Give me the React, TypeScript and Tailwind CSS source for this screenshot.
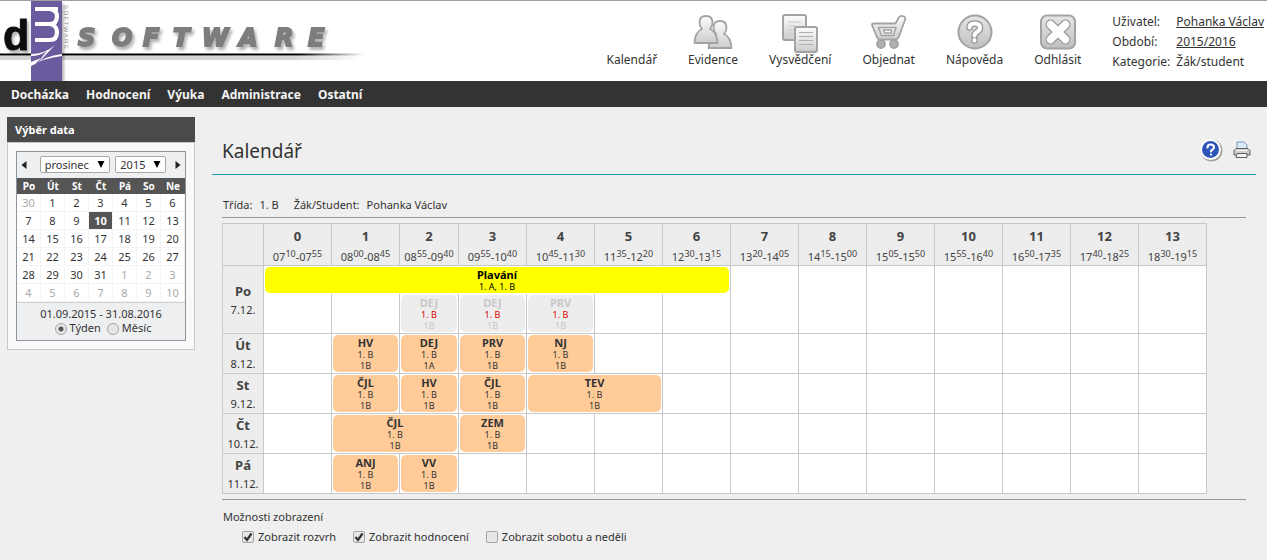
import { clsx } from 'clsx';
import type { ReactNode } from 'react';

type Lesson = {
  title: string;
  group: string;
  room: string;
  span?: number;
  cancelled?: boolean;
};

type Slot = Lesson | null;

const MENU = ['Docházka', 'Hodnocení', 'Výuka', 'Administrace', 'Ostatní'];

const HOURS = [
  ['07', '10', '07', '55'],
  ['08', '00', '08', '45'],
  ['08', '55', '09', '40'],
  ['09', '55', '10', '40'],
  ['10', '45', '11', '30'],
  ['11', '35', '12', '20'],
  ['12', '30', '13', '15'],
  ['13', '20', '14', '05'],
  ['14', '15', '15', '00'],
  ['15', '05', '15', '50'],
  ['15', '55', '16', '40'],
  ['16', '50', '17', '35'],
  ['17', '40', '18', '25'],
  ['18', '30', '19', '15'],
];

const lesson = (title: string, room = '1B', span = 1): Lesson => ({
  title,
  group: '1. B',
  room,
  span,
});
const cancelled = (title: string): Lesson => ({ ...lesson(title), cancelled: true });
const empty = (count: number): Slot[] => Array.from({ length: count }, () => null);

const DAYS: { name: string; date: string; slots: Slot[] }[] = [
  {
    name: 'Út',
    date: '8.12.',
    slots: [null, lesson('HV'), lesson('DEJ', '1A'), lesson('PRV'), lesson('NJ'), ...empty(9)],
  },
  {
    name: 'St',
    date: '9.12.',
    slots: [null, lesson('ČJL'), lesson('HV'), lesson('ČJL'), lesson('TEV', '1B', 2), ...empty(8)],
  },
  {
    name: 'Čt',
    date: '10.12.',
    slots: [null, lesson('ČJL', '1B', 2), lesson('ZEM'), ...empty(10)],
  },
  {
    name: 'Pá',
    date: '11.12.',
    slots: [null, lesson('ANJ'), lesson('VV'), ...empty(11)],
  },
];

const MONDAY_SLOTS: Slot[] = [null, null, cancelled('DEJ'), cancelled('DEJ'), cancelled('PRV'), null, null];

const WEEKS = [
  [30, 1, 2, 3, 4, 5, 6],
  [7, 8, 9, 10, 11, 12, 13],
  [14, 15, 16, 17, 18, 19, 20],
  [21, 22, 23, 24, 25, 26, 27],
  [28, 29, 30, 31, 1, 2, 3],
  [4, 5, 6, 7, 8, 9, 10],
];

const isOutside = (week: number, day: number) =>
  (week === 0 && day > 20) || (week > 3 && day < 20);

function Logo() {
  return (
    <svg width="366" height="80" viewBox="0 0 366 80" role="img" aria-label="dm Software">
      <defs>
        <linearGradient id="line" x1="0" x2="1">
          <stop offset="0.82" stopColor="#000" />
          <stop offset="1" stopColor="#000" stopOpacity="0" />
        </linearGradient>
        <linearGradient id="lineShadow" x1="0" x2="1">
          <stop offset="0.8" stopColor="#d4d4d4" />
          <stop offset="1" stopColor="#d4d4d4" stopOpacity="0" />
        </linearGradient>
        <filter id="shadow" x="-10%" y="-20%" width="120%" height="160%">
          <feDropShadow dx="2" dy="3" stdDeviation="1.5" floodColor="#000" floodOpacity="0.3" />
        </filter>
      </defs>
      <rect y="55" width="364" height="4" fill="url(#lineShadow)" />
      <rect y="52.500" width="364" height="2" fill="url(#line)" />
      <text x="3" y="49" fontFamily="Liberation Sans" fontWeight="700" fontSize="43" fill="#111" stroke="#111" filter="url(#shadow)">
        d
      </text>
      <rect x="31" y="0" width="31" height="80" fill="#6a5a9e" filter="url(#shadow)" />
      <path
        d="M35 8H58M50 8Q57 9.500 57 15Q57 23 50 23H35M50 23Q57 24.500 57 31Q57 39 50 39H35"
        fill="none"
        stroke="#fff"
        strokeWidth="4.200"
      />
      <g fill="#fff">
        <path d="M31 53Q45 53 55 44L39 61Q42 55 47 50Q40 55 31 55Z" />
        <path d="M31 61L41 57L34 64Q45 55 62 53V55Q44 57 31 65Z" />
      </g>
      <text
        x="0 5.500 11.500 16.500 21.500 28.500 34 40"
        y="0"
        transform="translate(64 4) rotate(90)"
        fontFamily="Liberation Sans"
        fontSize="6"
        fill="#888"
      >
        SOFTWARE
      </text>
      <text
        x="78 112 143 173 202 239 275 308"
        y="45"
        fontFamily="DejaVu Sans"
        fontWeight="700"
        fontStyle="italic"
        fontSize="24"
        fill="#7d7d7d"
        stroke="#7d7d7d"
        strokeWidth="2"
        filter="url(#shadow)"
      >
        SOFTWARE
      </text>
    </svg>
  );
}

function IconDefs() {
  return (
    <svg width="0" height="0" className="absolute" aria-hidden="true">
      <defs>
        <linearGradient id="silver" x1="0" y1="0" x2="0" y2="1">
          <stop offset="0" stopColor="#fdfdfd" />
          <stop offset="1" stopColor="#cccccc" />
        </linearGradient>
        <linearGradient id="silverDark" x1="0" y1="0" x2="0" y2="1">
          <stop offset="0" stopColor="#e6e6e6" />
          <stop offset="1" stopColor="#bfbfbf" />
        </linearGradient>
      </defs>
    </svg>
  );
}

function PeopleIcon() {
  const person = 'M9 18Q6.500 15 6.500 11.500Q6.500 5 13 5Q19.500 5 19.500 11.500Q19.500 15 17 18Q24 21 24.500 32H1.500Q2 21 9 18Z';
  return (
    <svg width="40" height="36" viewBox="0 0 40 36" fill="url(#silver)" stroke="#a3a3a3" strokeWidth="1.800" strokeLinejoin="round">
      <path d={person} transform="translate(14 2)" />
      <path d={person} transform="translate(0 -3)" />
    </svg>
  );
}

function PagesIcon() {
  return (
    <svg width="38" height="40" viewBox="0 0 38 40" fill="url(#silver)" stroke="#a3a3a3" strokeWidth="2">
      <rect x="2" y="1" width="23" height="25" rx="2" />
      <path d="M7 8H20M7 12H15M7 16H15M7 20H14" stroke="#c9c9c9" strokeWidth="1" />
      <rect x="14" y="13" width="22" height="25" rx="2" />
      <path d="M18 18.500H32M18 22.500H32M18 26.500H32M18 30.500H32" stroke="#b0b0b0" strokeWidth="1" />
    </svg>
  );
}

function CartIcon() {
  return (
    <svg width="36" height="36" viewBox="0 0 36 36" fill="url(#silver)" stroke="#a3a3a3" strokeWidth="1.800" strokeLinejoin="round">
      <path d="M1 11Q1 9.500 3 9.500H24.500L27.500 4Q28.500 1.500 31.500 2Q35 2.500 34 6L27.500 23.500Q26.500 25.500 24.500 25.500H9Q7 25.500 6 23.500Z" />
      <path d="M7.500 13.500H25L22.500 21.500H10.500Z" fill="#e8e8e8" strokeWidth="1.500" />
      <path d="M12.500 16H20.500V19H13.500Z" fill="#fff" strokeWidth="1.500" />
      <circle cx="10" cy="30" r="4" fill="#b0b0b0" />
      <circle cx="23" cy="30" r="4" fill="#b0b0b0" />
    </svg>
  );
}

function QuestionIcon() {
  const mark = 'M12.500 13.500Q12.500 9.500 17.500 9.500Q23 9.500 23 13.500Q23 16.500 20 18Q17.500 19.500 17.500 21.500M17.500 26V26.500';
  return (
    <svg width="36" height="36" viewBox="0 0 36 36" fill="none" strokeLinecap="round">
      <circle cx="18" cy="18" r="16.500" fill="url(#silverDark)" stroke="#a3a3a3" strokeWidth="2" />
      <path d={mark} stroke="#969696" strokeWidth="6.500" />
      <path d={mark} stroke="#fff" strokeWidth="4" />
    </svg>
  );
}

function CloseIcon() {
  return (
    <svg width="38" height="36" viewBox="0 0 38 36" fill="none" strokeLinecap="round">
      <rect x="2" y="1.500" width="34" height="33" rx="6" fill="url(#silverDark)" stroke="#a3a3a3" strokeWidth="2" />
      <path d="M11.500 10.500L26.500 25.500M26.500 10.500L11.500 25.500" stroke="#969696" strokeWidth="10" />
      <path d="M11.500 10.500L26.500 25.500M26.500 10.500L11.500 25.500" stroke="#fff" strokeWidth="7.500" />
    </svg>
  );
}

function HelpIcon() {
  return (
    <svg width="24" height="24" viewBox="0 0 24 24" fill="none" strokeLinecap="round">
      <circle cx="12.500" cy="12.500" r="11" fill="#a2a2a2" />
      <circle cx="11.500" cy="11.500" r="10.500" fill="#fff" />
      <circle cx="11.500" cy="11.500" r="8.500" fill="#2d56b8" />
      <path d="M8.500 9.500Q8.500 6.500 11.500 6.500Q15 6.500 15 9.300Q15 11 13 12Q12 12.600 12 13.500M12 16.500V16.600" stroke="#fff" strokeWidth="2.200" />
    </svg>
  );
}

function PrinterIcon() {
  return (
    <svg width="18" height="18" viewBox="0 0 18 18" strokeLinejoin="round">
      <path d="M4 9V1H11L14 4V9Z" fill="#dceaf8" stroke="#7796c4" />
      <path d="M3 7.500H15L17 9.500V14H1V9.500Z" fill="#d0d0d0" stroke="#5f5f5f" />
      <path d="M4 9.500H14" stroke="#f5f5f5" />
      <path d="M4 12.500H14V16.500H3Z" fill="#f4f4f4" stroke="#5f5f5f" />
    </svg>
  );
}

const TOOLBAR: { label: string; icon: ReactNode }[] = [
  { label: 'Kalendář', icon: null },
  { label: 'Evidence', icon: <PeopleIcon /> },
  { label: 'Vysvědčení', icon: <PagesIcon /> },
  { label: 'Objednat', icon: <CartIcon /> },
  { label: 'Nápověda', icon: <QuestionIcon /> },
  { label: 'Odhlásit', icon: <CloseIcon /> },
];

function Header() {
  return (
    <header className="flex h-[81px] justify-between border-t border-[#a0a0a0] bg-white">
      <Logo />
      <div className="flex">
        <nav className="flex gap-[31px] pt-[13px]">
          {TOOLBAR.map(({ label, icon }) => (
            <a key={label} href="#" className="flex flex-col items-center text-[12px] leading-4">
              <span className="flex h-[38px] items-start justify-center">{icon}</span>
              {label}
            </a>
          ))}
        </nav>
        <dl className="ml-[31px] grid grid-cols-[auto_auto] content-start gap-x-[6px] pt-[11px] pr-[3px] text-[12px] leading-5">
          <dt>Uživatel:</dt>
          <dd><a href="#" className="underline">Pohanka Václav</a></dd>
          <dt>Období:</dt>
          <dd><a href="#" className="underline">2015/2016</a></dd>
          <dt>Kategorie:</dt>
          <dd>Žák/student</dd>
        </dl>
      </div>
    </header>
  );
}

function Select({ label, value, className }: { label: string; value: string; className: string }) {
  return (
    <span className={clsx('relative', className)}>
      <select
        aria-label={label}
        defaultValue={value}
        className="h-[17px] w-full appearance-none rounded-xs border border-[#a9a9a9] bg-white pl-1 text-[11px] leading-[15px]"
      >
        <option>{value}</option>
      </select>
      <svg width="8" height="7" viewBox="0 0 8 7" className="pointer-events-none absolute top-[5px] right-[5px]">
        <path d="M0.500 0H7.500L4 7Z" fill="#000" />
      </svg>
    </span>
  );
}

function DatePicker() {
  return (
    <aside className="w-[188px] shrink-0">
      <h2 className="h-[25px] bg-[#4a4a4a] pl-2 text-[11px] leading-[26px] font-bold text-white">Výběr data</h2>
      <div className="border border-[#c8c8c8] bg-[#f9f9f9] p-2">
        <div className="border border-[#8f949c] bg-[#eeeff1] text-[11px]">
          <div className="flex h-[26px] items-center justify-between px-1">
            <button type="button" aria-label="Předchozí měsíc" className="w-[13px]">
              <svg width="6" height="10" viewBox="0 0 6 10"><path d="M5.500 1V9L0.500 5Z" fill="#222" /></svg>
            </button>
            <Select label="Měsíc" value="prosinec" className="w-[70px]" />
            <Select label="Rok" value="2015" className="w-[51px]" />
            <button type="button" aria-label="Následující měsíc" className="flex w-[9px] justify-end">
              <svg width="6" height="10" viewBox="0 0 6 10"><path d="M0.500 1V9L5.500 5Z" fill="#222" /></svg>
            </button>
          </div>
          <table className="w-full table-fixed border-separate border-spacing-0 bg-white text-center leading-[16px]">
            <thead>
              <tr className="h-[16px] bg-[#555] text-[10px] leading-[16px] text-white">
                {['Po', 'Út', 'St', 'Čt', 'Pá', 'So', 'Ne'].map((day) => (
                  <th key={day}>{day}</th>
                ))}
              </tr>
            </thead>
            <tbody>
              {WEEKS.map((week, row) => (
                <tr key={row} className="h-[18px]">
                  {week.map((day) => (
                    <td
                      key={day}
                      className={clsx(
                        'border-r border-b border-[#f4f4f4]',
                        isOutside(row, day) && 'text-[#aaa]',
                        row === 1 && day === 10 && 'bg-[#555] font-bold text-white',
                      )}
                    >
                      {day}
                    </td>
                  ))}
                </tr>
              ))}
            </tbody>
          </table>
          <div className="border-t border-[#d0d0d0] pt-[3px] pb-[5px] text-center leading-[15px]">
            <p>01.09.2015 - 31.08.2016</p>
            <div className="flex justify-center gap-[6px] pl-1">
              {['Týden', 'Měsíc'].map((label, i) => (
                <label key={label} className="flex items-start gap-[3px] leading-[14px]">
                  <input
                    type="radio"
                    name="range"
                    defaultChecked={i === 0}
                    className="mt-[2px] size-3 appearance-none rounded-full border border-[#a5a5a5] bg-[#e6e6e6] checked:bg-[radial-gradient(circle,#555_2px,#e6e6e6_3px)]"
                  />
                  {label}
                </label>
              ))}
            </div>
          </div>
        </div>
      </div>
    </aside>
  );
}

function LessonCard({ item }: { item: Lesson }) {
  return (
    <div
      className={clsx(
        'm-px h-[37px] rounded-[5px] pt-[2px] text-[9px] leading-[11px]',
        item.cancelled ? 'bg-[#ededed] text-[#c8c8c8]' : 'bg-[#ffcc99] text-[#333]',
      )}
    >
      <div className="text-[11px] leading-3 font-bold">{item.title}</div>
      <div className={clsx(item.cancelled && 'text-[#e00000]')}>{item.group}</div>
      <div>{item.room}</div>
    </div>
  );
}

const CELL = 'border-l border-t border-[#c8c8c8] p-0 align-top';

function DayHeading({ name, date, rowSpan }: { name: string; date: string; rowSpan?: number }) {
  return (
    <th rowSpan={rowSpan} className="border-t border-l border-[#c8c8c8] bg-[#ededed] p-0 text-[11px] leading-[17px] font-normal">
      <div className="text-[13px] leading-5 font-bold text-[#444]">{name}</div>
      {date}
    </th>
  );
}

function Timetable() {
  return (
    <div className="pt-[5px] pr-[39px]">
      <table className="w-full table-fixed border-separate border-spacing-0 border-r border-b border-[#c8c8c8] text-center">
        <colgroup>
          <col className="w-[41px]" />
          {HOURS.map((_, i) => (
            <col key={i} className={i === 2 ? 'w-[59px]' : undefined} />
          ))}
        </colgroup>
        <thead>
          <tr className="h-[42px] bg-[#ededed]">
            <th className={CELL} />
            {HOURS.map(([fromHour, fromMinute, toHour, toMinute], i) => (
              <th key={i} className={clsx(CELL, 'text-[11px] leading-4 font-normal text-[#444]')}>
                <div className="pt-1 pb-[5px] text-[13px] leading-4 font-bold">{i}</div>
                <div className="h-4 whitespace-nowrap">
                  {fromHour}
                  <sup className="text-[9px]">{fromMinute}</sup>-{toHour}
                  <sup className="text-[9px]">{toMinute}</sup>
                </div>
              </th>
            ))}
          </tr>
        </thead>
        <tbody className="bg-white">
          <tr className="h-[29px]">
            <DayHeading name="Po" date="7.12." rowSpan={2} />
            <td colSpan={7} className={CELL}>
              <div className="m-px h-[26px] rounded-[5px] bg-[#ffff00] pt-[2px] text-[9px] leading-[11px] text-black">
                <div className="text-[11px] leading-3 font-bold">Plavání</div>
                1. A, 1. B
              </div>
            </td>
            {HOURS.slice(7).map((hour) => (
              <td key={hour.join()} rowSpan={2} className={CELL} />
            ))}
          </tr>
          <tr className="h-[39px]">
            {MONDAY_SLOTS.map((slot, i) => (
              <td key={i} className="border-l border-[#c8c8c8] p-0 align-top">
                {slot && <LessonCard item={slot} />}
              </td>
            ))}
          </tr>
          {DAYS.map(({ name, date, slots }) => (
            <tr key={name} className="h-[40px]">
              <DayHeading name={name} date={date} />
              {slots.map((slot, i) => (
                <td key={i} colSpan={slot?.span} className={CELL}>
                  {slot && <LessonCard item={slot} />}
                </td>
              ))}
            </tr>
          ))}
        </tbody>
      </table>
    </div>
  );
}

const OPTIONS = [
  { label: 'Zobrazit rozvrh', checked: true },
  { label: 'Zobrazit hodnocení', checked: true },
  { label: 'Zobrazit sobotu a neděli', checked: false },
];

function DisplayOptions() {
  return (
    <fieldset className="mt-[5px] border-t border-[#999] pt-[9px] text-[11px] leading-4">
      <p className="pl-px">Možnosti zobrazení</p>
      <div className="mt-1 flex gap-[17px] pl-5">
        {OPTIONS.map(({ label, checked }) => (
          <label key={label} className="flex items-center gap-1">
            <span className="relative flex">
              <input
                type="checkbox"
                defaultChecked={checked}
                className="peer size-3 appearance-none rounded-xs border border-[#a5a5a5] bg-[#e6e6e6]"
              />
              <svg
                width="10"
                height="10"
                viewBox="0 0 10 10"
                className="pointer-events-none absolute top-px left-px hidden peer-checked:block"
              >
                <path d="M1.500 5L4 8L8.500 1.500" fill="none" stroke="#333" strokeWidth="2.200" />
              </svg>
            </span>
            {label}
          </label>
        ))}
      </div>
    </fieldset>
  );
}

export default function App() {
  return (
    <div className="min-h-screen bg-[#efefef] font-['Noto_Sans',sans-serif] text-[#333]">
      <IconDefs />
      <Header />
      <nav className="flex h-[26px] items-center gap-[17px] bg-[#333] pt-px pl-[11px] text-[12px] font-bold text-[#f5f5f5]">
        {MENU.map((item) => (
          <a key={item} href="#">{item}</a>
        ))}
      </nav>
      <div className="flex gap-[17px] pt-[10px] pr-[11px] pl-[7px]">
        <DatePicker />
        <main className="min-w-0 flex-1">
          <div className="flex h-[58px] items-center justify-between border-b border-[#1d9cb5] pt-2 pr-[5px] pl-[10px]">
            <h1 className="pt-[3px] text-[19px]">Kalendář</h1>
            <div className="flex items-center gap-[10px]">
              <button type="button" aria-label="Nápověda"><HelpIcon /></button>
              <button type="button" aria-label="Tisk"><PrinterIcon /></button>
            </div>
          </div>
          <div className="pr-[10px] pl-[10px]">
            <p className="flex gap-[7px] border-b border-[#999] pt-[22px] pb-1 pl-px text-[11px] leading-4">
              <span>Třída:</span>
              <span className="mr-2">1. B</span>
              <span>Žák/Student:</span>
              <span>Pohanka Václav</span>
            </p>
            <Timetable />
            <DisplayOptions />
          </div>
        </main>
      </div>
    </div>
  );
}
